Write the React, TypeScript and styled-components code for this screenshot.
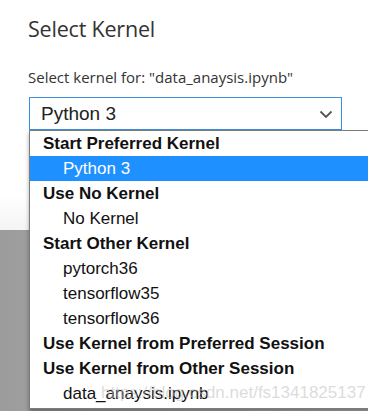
import * as React from 'react';
import styled, { createGlobalStyle } from 'styled-components';

const GlobalStyle = createGlobalStyle`
  html, body {
    margin: 0;
    padding: 0;
  }
  body {
    width: 368px;
    height: 411px;
    overflow: hidden;
    background: linear-gradient(90deg, #9c9c9c 0%, #b4b4b4 100%);
  }
`;

const Page = styled.div`
  position: relative;
  width: 368px;
  height: 411px;
  overflow: hidden;
`;

const Dialog = styled.div`
  box-sizing: border-box;
  height: 230px;
  padding: 14px 27px 0 28px;
  background: linear-gradient(180deg, #ffffff 85%, #f4f4f4 100%);
  display: flex;
  flex-direction: column;
  font-family: 'Open Sans', 'Noto Sans', sans-serif;
  color: #333;
`;

const Title = styled.h1`
  margin: 0;
  font-size: 21.5px;
  font-weight: 400;
  line-height: 30px;
  letter-spacing: -0.2px;
`;

const Label = styled.div`
  margin-top: 23px;
  font-size: 15px;
  line-height: 20px;
`;

const SelectBox = styled.div`
  box-sizing: border-box;
  margin-top: 10px;
  margin-left: 1px;
  width: 313px;
  height: 33px;
  border: 1px solid #3a8ee6;
  display: flex;
  align-items: center;
  justify-content: space-between;
  padding: 1px 8px 0 11px;
  background: #fff;
  font-family: 'Liberation Sans', Arial, sans-serif;
  font-size: 19px;
  color: #222;
`;

const Menu = styled.div`
  position: absolute;
  top: 130px;
  left: 29px;
  width: 345px;
  box-sizing: border-box;
  border: 1px solid #7d7d7d;
  background: #fff;
  padding-bottom: 2px;
  box-shadow: 0 3px 4px rgba(0, 0, 0, 0.35);
  font-family: 'Liberation Sans', Arial, sans-serif;
  font-size: 17px;
  color: #111;
`;

const Group = styled.div`
  height: 25px;
  line-height: 25px;
  padding-left: 13px;
  font-weight: 700;
  white-space: nowrap;
`;

const Option = styled.div<{ $selected?: boolean }>`
  height: 25px;
  line-height: 25px;
  padding-left: 33px;
  white-space: nowrap;
  background: ${(p) => (p.$selected ? '#1e90ff' : 'transparent')};
  color: ${(p) => (p.$selected ? '#fff' : '#111')};
`;

const Watermark = styled.div`
  position: absolute;
  left: 101px;
  top: 383px;
  font-family: 'Liberation Sans', Arial, sans-serif;
  font-size: 17px;
  color: rgba(190, 190, 190, 0.55);
  white-space: nowrap;
  pointer-events: none;
`;

const groups: { label: string; options: string[] }[] = [
  { label: 'Start Preferred Kernel', options: ['Python 3'] },
  { label: 'Use No Kernel', options: ['No Kernel'] },
  { label: 'Start Other Kernel', options: ['pytorch36', 'tensorflow35', 'tensorflow36'] },
  { label: 'Use Kernel from Preferred Session', options: [] },
  { label: 'Use Kernel from Other Session', options: ['data_anaysis.ipynb'] },
];

export default function App() {
  return (
    <Page>
      <GlobalStyle />
      <Dialog>
        <Title>Select Kernel</Title>
        <Label>Select kernel for: "data_anaysis.ipynb"</Label>
        <SelectBox>
          <span>Python 3</span>
          <svg width="14" height="9" viewBox="0 0 14 9">
            <path d="M1.5 1.5 L7 7 L12.5 1.5" fill="none" stroke="#555" strokeWidth="1.8" />
          </svg>
        </SelectBox>
      </Dialog>
      <Menu>
        {groups.map((g) => (
          <React.Fragment key={g.label}>
            <Group>{g.label}</Group>
            {g.options.map((o, i) => (
              <Option key={o} $selected={g.label === 'Start Preferred Kernel' && i === 0}>
                {o}
              </Option>
            ))}
          </React.Fragment>
        ))}
      </Menu>
      <Watermark>https://blog.csdn.net/fs1341825137</Watermark>
    </Page>
  );
}
